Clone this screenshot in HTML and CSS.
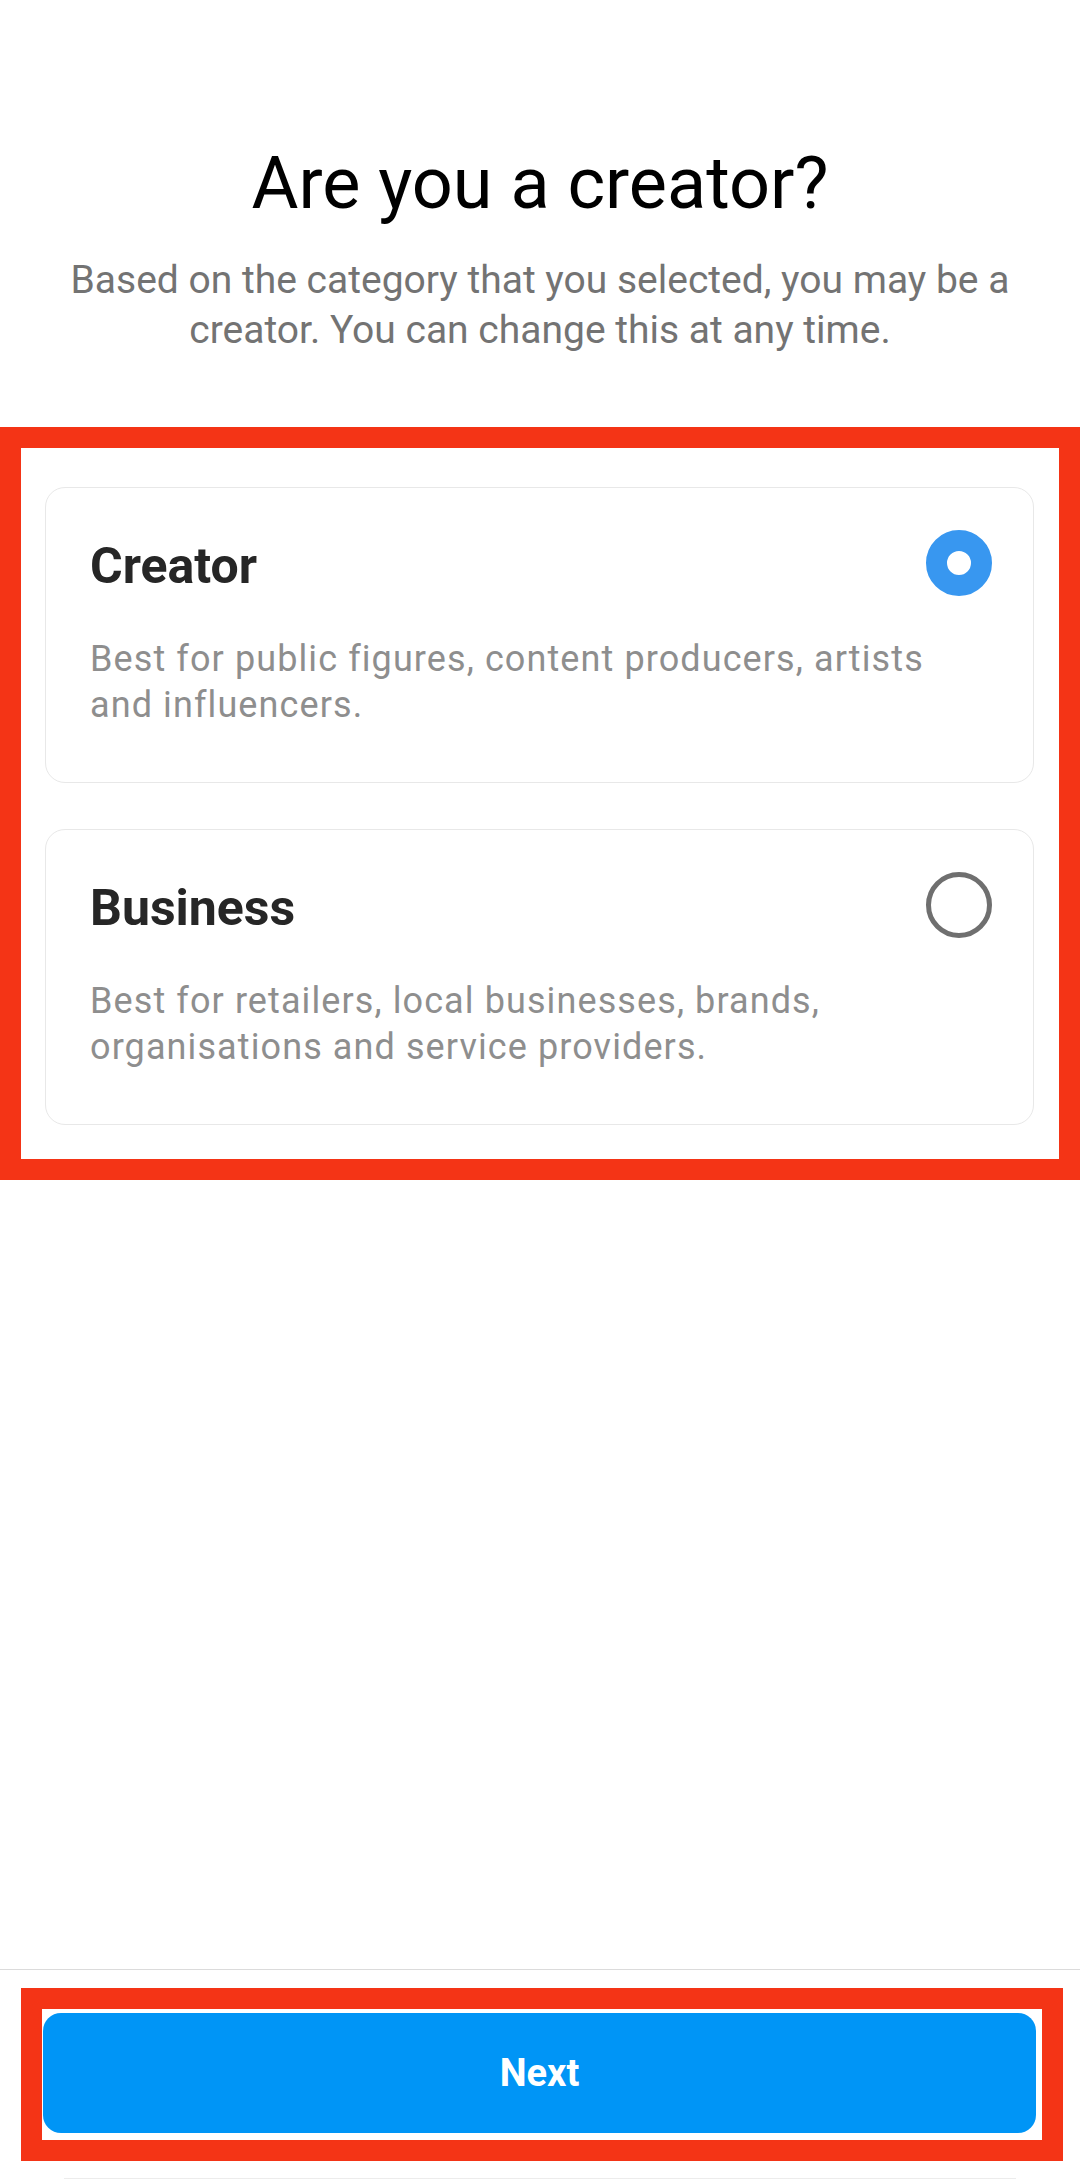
FILE: index.html
```html
<!DOCTYPE html>
<html lang="en">
<head>
<meta charset="utf-8">
<title>Are you a creator?</title>
<link rel="stylesheet" href="styles.css">
</head>
<body>
<div class="screen">
  <header class="intro">
    <h1 class="title">Are you a creator?</h1>
    <p class="subtitle">Based on the category that you selected, you may be a creator. You can change this at any time.</p>
  </header>

  <section class="options highlight">
    <div class="card">
      <div class="card-head">
        <h2 class="card-title">Creator</h2>
        <span class="radio radio-on"></span>
      </div>
      <p class="card-desc">Best for public figures, content producers, artists and influencers.</p>
    </div>
    <div class="card">
      <div class="card-head">
        <h2 class="card-title">Business</h2>
        <span class="radio"></span>
      </div>
      <p class="card-desc">Best for retailers, local businesses, brands, organisations and service providers.</p>
    </div>
  </section>

  <div class="spacer"></div>

  <footer class="footer">
    <div class="button-frame">
      <button class="next-btn" type="button">Next</button>
    </div>
    <div class="bottom-line"></div>
  </footer>
</div>
</body>
</html>
```

FILE: styles.css
```css
* {
  box-sizing: border-box;
}

html, body {
  margin: 0;
  padding: 0;
  height: 100%;
  background: #ffffff;
}

body {
  font-family: Roboto, "Noto Sans", "Liberation Sans", Arial, sans-serif;
  color: #000000;
}

.screen {
  min-height: 100vh;
  display: flex;
  flex-direction: column;
}

.intro {
  padding: 141px 50px 0;
  text-align: center;
}

.title {
  margin: 0;
  font-size: 72px;
  line-height: 86px;
  font-weight: 400;
  color: #000000;
}

.subtitle {
  margin: 28px 0 0;
  font-size: 39px;
  line-height: 50px;
  color: #737373;
}

.highlight {
  border: 21px solid #f43416;
}

.options {
  margin-top: 72px;
  padding: 39px 25px 34px 24px;
  display: flex;
  flex-direction: column;
  gap: 46px;
}

.card {
  border: 1.5px solid #e8e8e8;
  border-radius: 20px;
  padding: 48px 41px 54px 44px;
}

.card-head {
  display: flex;
  justify-content: space-between;
  align-items: flex-start;
}

.card-title {
  margin: 0;
  font-size: 50px;
  line-height: 60px;
  font-weight: 700;
  color: #262626;
}

.radio {
  width: 66px;
  height: 66px;
  border-radius: 50%;
  border: 5px solid #6f6f6f;
  margin-top: -6px;
  flex: none;
}

.radio-on {
  border: 21px solid #3897f0;
  background: #ffffff;
}

.card-desc {
  margin: 40px 0 0;
  max-width: 870px;
  font-size: 36px;
  line-height: 46px;
  letter-spacing: 1.1px;
  color: #8e8e8e;
}

.spacer {
  flex: 1;
}

.footer {
  border-top: 1px solid #dbdbdb;
  padding: 18px 17px 3px 21px;
}

.button-frame {
  border: 21px solid #f43416;
  padding: 4px 6px 7px 1px;
}

.next-btn {
  display: block;
  width: 100%;
  height: 120px;
  border: none;
  border-radius: 18px;
  background: #0095f6;
  color: #ffffff;
  font-family: Roboto, "Noto Sans", "Liberation Sans", Arial, sans-serif;
  font-size: 38px;
  font-weight: 700;
  padding: 0;
}

.bottom-line {
  margin: 17px 47px 0 43px;
  height: 1px;
  background: #ececec;
}
```
